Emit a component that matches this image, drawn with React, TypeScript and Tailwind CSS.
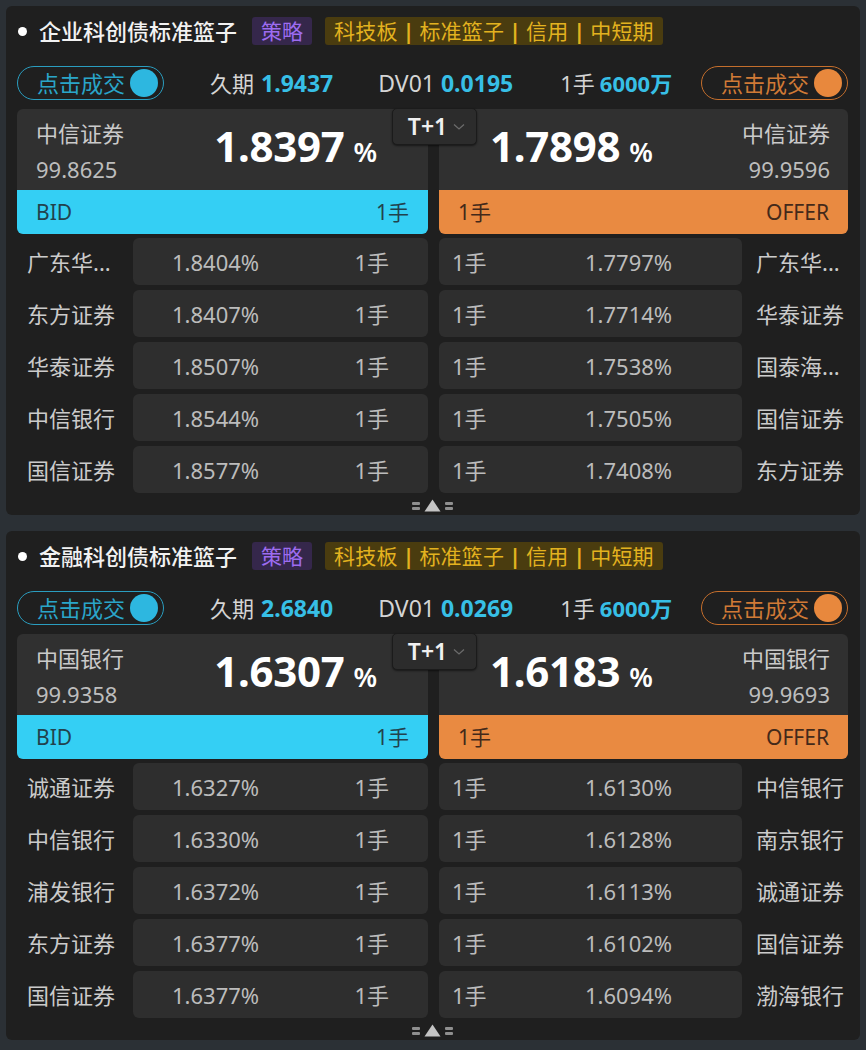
import React from "react";

type Row = [string, string];
type Panel = {
  title: string;
  dur: string;
  dv: string;
  bidName: string;
  bidPx: string;
  bid: string;
  ask: string;
  askName: string;
  askPx: string;
  bids: Row[];
  asks: Row[];
};

const panels: Panel[] = [
  {
    title: "企业科创债标准篮子",
    dur: "1.9437",
    dv: "0.0195",
    bidName: "中信证券",
    bidPx: "99.8625",
    bid: "1.8397",
    ask: "1.7898",
    askName: "中信证券",
    askPx: "99.9596",
    bids: [
      ["广东华...", "1.8404%"],
      ["东方证券", "1.8407%"],
      ["华泰证券", "1.8507%"],
      ["中信银行", "1.8544%"],
      ["国信证券", "1.8577%"],
    ],
    asks: [
      ["广东华...", "1.7797%"],
      ["华泰证券", "1.7714%"],
      ["国泰海...", "1.7538%"],
      ["国信证券", "1.7505%"],
      ["东方证券", "1.7408%"],
    ],
  },
  {
    title: "金融科创债标准篮子",
    dur: "2.6840",
    dv: "0.0269",
    bidName: "中国银行",
    bidPx: "99.9358",
    bid: "1.6307",
    ask: "1.6183",
    askName: "中国银行",
    askPx: "99.9693",
    bids: [
      ["诚通证券", "1.6327%"],
      ["中信银行", "1.6330%"],
      ["浦发银行", "1.6372%"],
      ["东方证券", "1.6377%"],
      ["国信证券", "1.6377%"],
    ],
    asks: [
      ["中信银行", "1.6130%"],
      ["南京银行", "1.6128%"],
      ["诚通证券", "1.6113%"],
      ["国信证券", "1.6102%"],
      ["渤海银行", "1.6094%"],
    ],
  },
];

function Pill({ side }: { side: "bid" | "ask" }) {
  const bid = side === "bid";
  return (
    <div
      className={`flex h-[34px] w-[147px] items-center justify-between rounded-full border-[1.5px] pl-[19px] pr-[5px] ${
        bid ? "border-[#2a9dbf]" : "border-[#c46e2c]"
      }`}
    >
      <span className={`text-[22px] leading-none ${bid ? "text-[#2aa5c9]" : "text-[#d07a36]"}`}>点击成交</span>
      <span className={`h-[28px] w-[28px] rounded-full ${bid ? "bg-[#2db7e0]" : "bg-[#e8883d]"}`} />
    </div>
  );
}

function Big({ v }: { v: string }) {
  return (
    <div className="mb-[7px] flex items-baseline leading-none text-white">
      <span className="text-[42px] font-bold tracking-[-0.3px]">{v}</span>
      <span className="ml-[9px] text-[27px] font-semibold">%</span>
    </div>
  );
}

function PanelView({ p }: { p: Panel }) {
  return (
    <div className="flex h-[509px] flex-col rounded-[6px] bg-[#1f1f1f] pl-[11px] pr-[12px] pt-[11px]">
      {/* title */}
      <div className="flex h-[28px] items-center">
        <span className="ml-[1px] h-[9px] w-[9px] rounded-full bg-white" />
        <span className="ml-[12px] text-[22px] font-medium leading-none text-[#f2f2f2]">{p.title}</span>
        <span className="ml-[15px] flex h-[28px] items-center rounded-[3px] bg-[#35274b] px-[9px] text-[21px] leading-none text-[#9d6cf0]">
          策略
        </span>
        <span className="ml-[13px] flex h-[28px] items-center rounded-[3px] bg-[#4a3c0f] pl-[9px] pr-[9px] text-[21px] leading-none tracking-[0.2px] text-[#e3b21f]">
          科技板 <b className="mx-[5px] font-bold">|</b> 标准篮子 <b className="mx-[5px] font-bold">|</b> 信用{" "}
          <b className="mx-[5px] font-bold">|</b> 中短期
        </span>
      </div>

      {/* stats */}
      <div className="mt-[21px] flex h-[34px] items-center">
        <Pill side="bid" />
        <div className="ml-[46px] flex items-center leading-none">
          <span className="text-[22px] text-[#d4d4d4]">久期</span>
          <span className="ml-[7px] text-[23px] font-bold text-[#37bfe6]">{p.dur}</span>
        </div>
        <div className="ml-[45px] flex items-center leading-none">
          <span className="text-[23px] text-[#d4d4d4]">DV01</span>
          <span className="ml-[6px] text-[23px] font-bold text-[#37bfe6]">{p.dv}</span>
        </div>
        <div className="ml-[47px] flex items-center leading-none">
          <span className="text-[22px] text-[#d4d4d4]">1手</span>
          <span className="ml-[5px] text-[22px] font-bold text-[#37bfe6]">6000万</span>
        </div>
        <div className="ml-auto">
          <Pill side="ask" />
        </div>
      </div>

      {/* best quotes */}
      <div className="relative mt-[9px] flex gap-[11px]">
        <div className="flex h-[125px] w-[411px] flex-col overflow-hidden rounded-[6px] bg-[#303030]">
          <div className="flex h-[81px] items-center justify-between pl-[19px] pr-[51px]">
            <div className="flex flex-col gap-[6px] self-start pt-[9px] text-[22px] leading-[30px]">
              <span className="text-[#cacaca]">{p.bidName}</span>
              <span className="text-[#bdbdbd]">{p.bidPx}</span>
            </div>
            <Big v={p.bid} />
          </div>
          <div className="flex h-[44px] items-center justify-between bg-[#34cff4] px-[19px] text-[21px] leading-none text-[#22424d]">
            <span>BID</span>
            <span>1手</span>
          </div>
        </div>
        <div className="flex h-[125px] w-[409px] flex-col overflow-hidden rounded-[6px] bg-[#303030]">
          <div className="flex h-[81px] items-center justify-between pl-[51px] pr-[18px]">
            <Big v={p.ask} />
            <div className="flex flex-col items-end gap-[6px] self-start pt-[9px] text-[22px] leading-[30px]">
              <span className="text-[#cacaca]">{p.askName}</span>
              <span className="text-[#bdbdbd]">{p.askPx}</span>
            </div>
          </div>
          <div className="flex h-[44px] items-center justify-between bg-[#e98a41] px-[19px] text-[21px] leading-none text-[#43291a]">
            <span>1手</span>
            <span>OFFER</span>
          </div>
        </div>
        <div className="absolute left-[375px] top-[-1px] flex h-[37px] w-[85px] items-center justify-center gap-[6px] rounded-[5px] border border-[#1b1b1b] bg-[#2c2c2c] pl-[4px] shadow-[0_1px_2px_rgba(0,0,0,0.5)]">
          <span className="text-[23px] font-semibold leading-none text-[#f0f0f0]">T+1</span>
          <svg width="12" height="8" viewBox="0 0 12 8" fill="none">
            <path d="M1 1.5 L6 6 L11 1.5" stroke="#6b6b6b" strokeWidth="1.3" />
          </svg>
        </div>
      </div>

      {/* depth rows */}
      <div className="mt-[4px] flex flex-col gap-[5px]">
        {p.bids.map((b, i) => {
          const a = p.asks[i];
          return (
            <div key={i} className="flex h-[47px] items-center text-[22px] leading-none">
              <div className="w-[116px] whitespace-nowrap pl-[10px] text-[#cbcbcb]">{b[0]}</div>
              <div className="flex h-full w-[295px] items-center justify-between rounded-[6px] bg-[#2e2e2e] px-[39px] text-[#bcbcbc]">
                <span>{b[1]}</span>
                <span>1手</span>
              </div>
              <div className="ml-[11px] flex h-full w-[303px] items-center rounded-[6px] bg-[#2e2e2e] text-[#bcbcbc]">
                <span className="w-[146px] pl-[13px]">1手</span>
                <span>{a[1]}</span>
              </div>
              <div className="w-[106px] whitespace-nowrap pl-[14px] text-[#cbcbcb]">{a[0]}</div>
            </div>
          );
        })}
      </div>

      {/* collapse handle */}
      <div className="flex flex-1 items-center justify-center gap-[4px] pt-[3px]">
        <div className="flex flex-col gap-[2px]">
          <span className="block h-[3px] w-[8px] rounded-[1px] bg-[#8f8f8f]" />
          <span className="block h-[3px] w-[8px] rounded-[1px] bg-[#8f8f8f]" />
        </div>
        <svg width="17" height="13" viewBox="0 0 17 13">
          <path d="M8.5 0.5 L16.5 12.5 L0.5 12.5 Z" fill="#c4c4c4" />
        </svg>
        <div className="flex flex-col gap-[2px]">
          <span className="block h-[3px] w-[8px] rounded-[1px] bg-[#8f8f8f]" />
          <span className="block h-[3px] w-[8px] rounded-[1px] bg-[#8f8f8f]" />
        </div>
      </div>
    </div>
  );
}

export default function App() {
  return (
    <div
      className="flex h-[1050px] w-[866px] flex-col gap-[16px] bg-[#2b3035] px-[6px] pt-[6px]"
      style={{ fontFamily: '"Noto Sans", "Noto Sans CJK SC", sans-serif' }}
    >
      {panels.map((p, i) => (
        <PanelView key={i} p={p} />
      ))}
    </div>
  );
}
